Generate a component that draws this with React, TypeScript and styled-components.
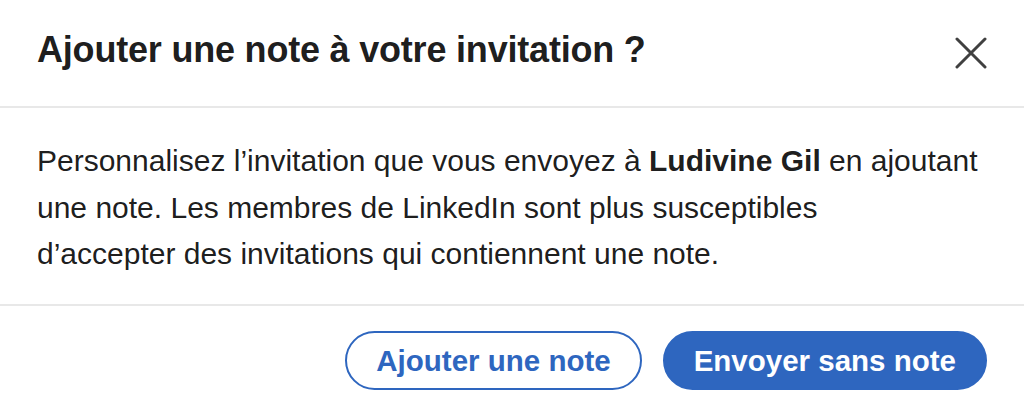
import styled, { createGlobalStyle } from "styled-components";

const GlobalStyle = createGlobalStyle`
    html, body {
        margin: 0;
        padding: 0;
        background: #fff;
    }
    body {
        font-family: "Liberation Sans", Arial, sans-serif;
        color: rgba(0, 0, 0, 0.9);
    }
`;

const Dialog = styled.div`
    width: 1024px;
    height: 404px;
    display: flex;
    flex-direction: column;
    background: #fff;
`;

const Header = styled.div`
    height: 108px;
    box-sizing: border-box;
    display: flex;
    align-items: center;
    justify-content: space-between;
    padding: 0 36px 6px 37px;
    border-bottom: 2px solid #e8e8e8;
`;

const Title = styled.h2`
    margin: 0;
    font-size: 36px;
    font-weight: 700;
    letter-spacing: -0.2px;
    color: rgba(0, 0, 0, 0.9);
`;

const CloseButton = styled.button`
    width: 34px;
    height: 34px;
    margin-top: 6px;
    padding: 0;
    border: none;
    background: none;
    display: flex;
    align-items: center;
    justify-content: center;
    cursor: pointer;
    color: rgba(0, 0, 0, 0.75);
`;

const Body = styled.div`
    flex: 1;
    padding: 30px 37px 0;
    border-bottom: 2px solid #e8e8e8;
`;

const Text = styled.p`
    margin: 0;
    font-size: 30px;
    line-height: 46.5px;
    color: rgba(0, 0, 0, 0.9);
    white-space: nowrap;
    strong {
        font-weight: 700;
    }
`;

const Footer = styled.div`
    height: 98px;
    box-sizing: border-box;
    display: flex;
    justify-content: flex-end;
    align-items: flex-start;
    gap: 21px;
    padding: 25px 37px 0;
`;

const Button = styled.button<{ $primary?: boolean }>`
    height: 59px;
    padding: 0 29px;
    border-radius: 30px;
    font-family: "Liberation Sans", Arial, sans-serif;
    font-size: 29.5px;
    font-weight: 700;
    cursor: pointer;
    border: 2px solid #2e66bf;
    background: ${(p) => (p.$primary ? "#2e66bf" : "#fff")};
    color: ${(p) => (p.$primary ? "#fff" : "#2e66bf")};
`;

export default function App() {
    return (
        <>
            <GlobalStyle />
            <Dialog>
                <Header>
                    <Title>Ajouter une note à votre invitation ?</Title>
                    <CloseButton aria-label="Fermer">
                        <svg width="32" height="32" viewBox="0 0 32 32">
                            <path
                                d="M2 2 L30 30 M30 2 L2 30"
                                stroke="currentColor"
                                strokeWidth="3"
                                strokeLinecap="round"
                            />
                        </svg>
                    </CloseButton>
                </Header>
                <Body>
                    <Text>
                        Personnalisez l’invitation que vous envoyez à <strong>Ludivine Gil</strong> en ajoutant
                        <br />
                        une note. Les membres de LinkedIn sont plus susceptibles
                        <br />
                        d’accepter des invitations qui contiennent une note.
                    </Text>
                </Body>
                <Footer>
                    <Button>Ajouter une note</Button>
                    <Button $primary>Envoyer sans note</Button>
                </Footer>
            </Dialog>
        </>
    );
}
